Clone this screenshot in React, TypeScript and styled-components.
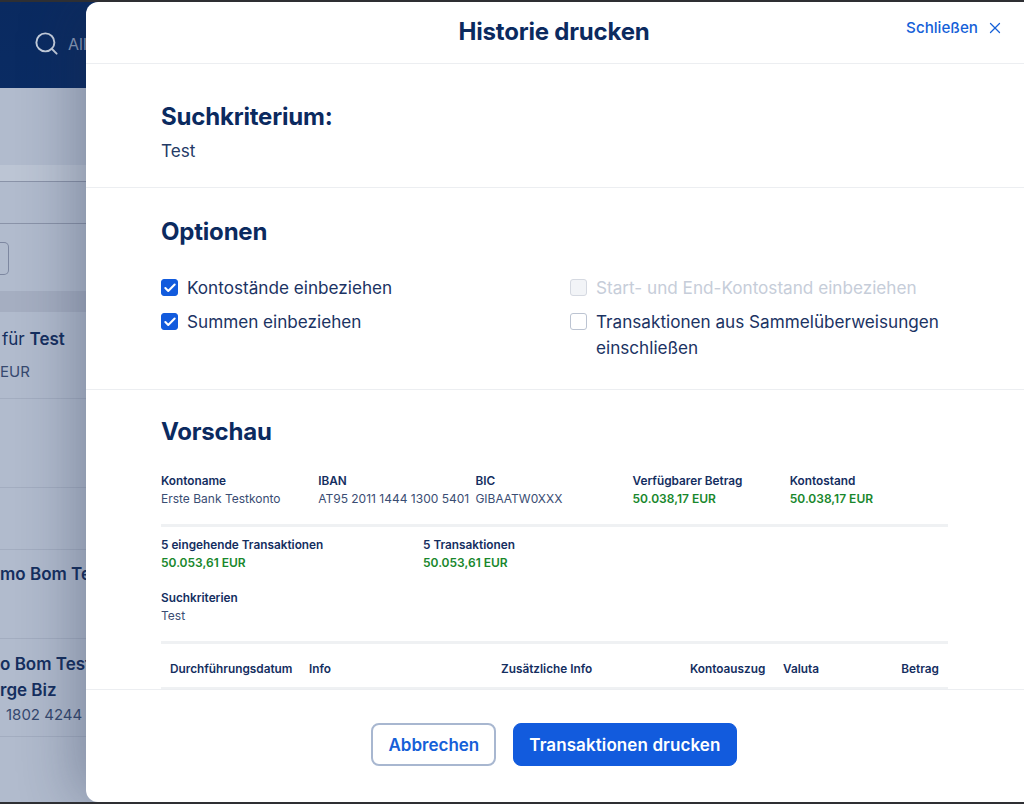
import React from 'react';
import styled, { createGlobalStyle } from 'styled-components';
import { Search, X, Check } from 'lucide-react';

const GlobalStyle = createGlobalStyle`
  html, body {
    margin: 0;
    padding: 0;
    overflow: hidden;
    font-family: Inter, 'Liberation Sans', sans-serif;
  }
  * { box-sizing: border-box; }
`;

const Frame = styled.div`
  width: 1024px;
  height: 804px;
  padding: 2px 0;
  background: #2e2f33;
`;

const Page = styled.div`
  position: relative;
  height: 800px;
  overflow: hidden;
  background: #b1bbcd;
`;

const TopBar = styled.div`
  height: 86px;
  display: flex;
  align-items: flex-start;
  gap: 8px;
  padding: 28px 0 0 33px;
  background: linear-gradient(175deg, #0a2a60 0%, #0a2c64 65%, #0a3578 100%);
  color: #c6cfdd;
`;

const SearchHint = styled.span`
  margin-top: 3px;
  font-size: 16px;
  line-height: 22px;
  color: #8c9cb9;
`;

const Spacer = styled.div<{ $h: number; $bg?: string; $line?: boolean }>`
  height: ${(p) => p.$h}px;
  background: ${(p) => p.$bg ?? 'transparent'};
  border-bottom: ${(p) => (p.$line ? '1px solid #8a93a8' : 'none')};
`;

const FilterRow = styled.div`
  height: 67px;
  padding-top: 18px;
`;

const GhostButton = styled.div`
  width: 9px;
  height: 33px;
  border: 1px solid #7d87a0;
  border-left: none;
  border-radius: 0 5px 5px 0;
`;

const TxRow = styled.div<{ $h: number; $top?: number }>`
  height: ${(p) => p.$h}px;
  padding-top: ${(p) => p.$top ?? 0}px;
  border-bottom: 1px solid #a3adc0;
  color: #152f5f;
  font-size: 16px;
  line-height: 26px;
  white-space: nowrap;
`;

const TxStrong = styled.div<{ $indent?: number }>`
  font-weight: 600;
  font-size: 17px;
  padding-left: ${(p) => p.$indent ?? 0}px;
`;

const TxPlain = styled.span`
  font-weight: 400;
`;

const TxMuted = styled.div<{ $indent?: number; $gap?: number }>`
  margin-top: ${(p) => p.$gap ?? 0}px;
  color: #36496f;
  font-size: 15px;
  padding-left: ${(p) => p.$indent ?? 0}px;
`;

const Modal = styled.div`
  position: absolute;
  top: 0;
  left: 86px;
  right: 0;
  bottom: 0;
  display: flex;
  flex-direction: column;
  background: #fff;
  border-radius: 12px 0 0 12px;
  box-shadow: -12px 0 56px rgba(30, 42, 75, 0.32);
  color: #0b2a5f;
`;

const ModalHead = styled.header`
  position: relative;
  flex: none;
  height: 62px;
  display: flex;
  justify-content: center;
  padding-right: 2px;
  border-bottom: 1px solid #eceef1;
`;

const ModalTitle = styled.h1`
  margin: 0;
  font-size: 24px;
  line-height: 60px;
  font-weight: 700;
  letter-spacing: -0.2px;
`;

const CloseLink = styled.div`
  position: absolute;
  top: 16px;
  right: 20px;
  display: flex;
  align-items: center;
  gap: 8px;
  font-size: 15.2px;
  line-height: 20px;
  font-weight: 500;
  color: #1560d8;
`;

const Body = styled.div`
  flex: 1;
  min-height: 0;
  overflow: hidden;
`;

const Section = styled.section<{ $h?: number; $top: number }>`
  padding: ${(p) => p.$top}px 76px 0 75px;
  height: ${(p) => (p.$h ? `${p.$h}px` : 'auto')};
  border-bottom: ${(p) => (p.$h ? '1px solid #eceef1' : 'none')};
`;

const SectionTitle = styled.h2`
  margin: 0;
  font-size: 24px;
  line-height: 32px;
  font-weight: 700;
  letter-spacing: -0.2px;
`;

const SearchTerm = styled.p`
  margin: 5px 0 0;
  font-size: 17.2px;
  line-height: 26px;
  color: #243a66;
`;

const Options = styled.div`
  display: grid;
  grid-template-columns: 409px 1fr;
  margin-top: 27px;
`;

const OptionColumn = styled.div`
  display: flex;
  flex-direction: column;
  gap: 9px;
`;

const Option = styled.label<{ $disabled?: boolean }>`
  display: flex;
  align-items: flex-start;
  gap: 9px;
  font-size: 17.15px;
  line-height: 26px;
  color: ${(p) => (p.$disabled ? '#c6cdd9' : '#1b3363')};
  margin-bottom: -1px;
`;

const Box = styled.span<{ $checked?: boolean; $disabled?: boolean }>`
  flex: none;
  width: 17px;
  height: 17px;
  margin-top: 4px;
  display: flex;
  align-items: center;
  justify-content: center;
  border-radius: 3px;
  border: 1px solid ${(p) => (p.$checked ? '#125bdd' : p.$disabled ? '#d5d9e1' : '#bcc4d2')};
  background: ${(p) => (p.$checked ? '#125bdd' : p.$disabled ? '#f2f4f7' : '#fff')};
  color: #fff;
`;

const PreviewGrid = styled.div<{ $cols: number }>`
  display: grid;
  grid-template-columns: repeat(${(p) => p.$cols}, ${(p) => 786 / p.$cols}px);
`;

const Divider = styled.div`
  height: 3px;
  background: #eff1f3;
`;

const Cell = styled.div`
  font-size: 12px;
  line-height: 18px;
`;

const CellLabel = styled.div`
  font-size: 11.8px;
  font-weight: 600;
  color: #142e5f;
`;

const CellValue = styled.div<{ $green?: boolean }>`
  font-weight: ${(p) => (p.$green ? 600 : 400)};
  color: ${(p) => (p.$green ? '#18872c' : '#3a4d73')};
  white-space: nowrap;
`;

const TopInfo = styled(PreviewGrid)`
  margin-top: 24px;
  padding-bottom: 16px;
`;

const Totals = styled(PreviewGrid)`
  padding-top: 9px;
`;

const Criteria = styled(Cell)`
  padding: 17px 0 16px;
`;

const TableHead = styled.div`
  display: grid;
  grid-template-columns: 139px 192px 189px 93px 1fr auto;
  height: 46px;
  align-items: center;
  padding: 7px 9px 0;
  border-bottom: 3px solid #eff1f3;
  font-size: 11.8px;
  font-weight: 600;
  color: #142e5f;
`;

const ModalFoot = styled.footer`
  flex: none;
  height: 113px;
  display: flex;
  justify-content: center;
  gap: 17px;
  padding-top: 33px;
  padding-right: 2px;
  border-top: 1px solid #eceef1;
`;

const Button = styled.button<{ $primary?: boolean }>`
  height: 43px;
  padding: 0 15px;
  border-radius: 8px;
  border: ${(p) => (p.$primary ? '1px solid #125bdd' : '2px solid #a8b7d0')};
  background: ${(p) => (p.$primary ? '#125bdd' : '#fff')};
  color: ${(p) => (p.$primary ? '#fff' : '#1560d8')};
  font-family: inherit;
  font-size: 17px;
  font-weight: 600;
  letter-spacing: ${(p) => (p.$primary ? '0.1px' : '0')};
`;

const CheckOption = ({ label, checked, disabled }: { label: string; checked?: boolean; disabled?: boolean }) => (
  <Option $disabled={disabled}>
    <Box $checked={checked} $disabled={disabled}>
      {checked && <Check size={14} strokeWidth={3.5} />}
    </Box>
    <span>{label}</span>
  </Option>
);

const accountInfo = [
  { label: 'Kontoname', value: 'Erste Bank Testkonto' },
  { label: 'IBAN', value: 'AT95 2011 1444 1300 5401' },
  { label: 'BIC', value: 'GIBAATW0XXX' },
  { label: 'Verfügbarer Betrag', value: '50.038,17 EUR', green: true },
  { label: 'Kontostand', value: '50.038,17 EUR', green: true },
];

const App: React.FC = () => {
  return (
    <Frame>
      <GlobalStyle />
      <Page>
        <TopBar>
          <Search size={27} strokeWidth={1.7} />
          <SearchHint>Alle</SearchHint>
        </TopBar>
        <Spacer $h={77} />
        <Spacer $h={17} $bg="#bcc5d4" $line />
        <Spacer $h={42} $line />
        <FilterRow>
          <GhostButton />
        </FilterRow>
        <Spacer $h={21} $bg="#a5aec1" />
        <TxRow $h={87} $top={14}>
          <TxStrong $indent={2}>
            <TxPlain>für </TxPlain>Test
          </TxStrong>
          <TxMuted $gap={7}>EUR</TxMuted>
        </TxRow>
        <TxRow $h={89} />
        <TxRow $h={62} />
        <TxRow $h={89} $top={11}>
          <TxStrong>mo Bom Test</TxStrong>
        </TxRow>
        <TxRow $h={98} $top={12}>
          <TxStrong>o Bom Test</TxStrong>
          <TxStrong>rge Biz</TxStrong>
          <TxMuted $indent={6} $gap={-1}>1802 4244</TxMuted>
        </TxRow>

        <Modal>
          <ModalHead>
            <ModalTitle>Historie drucken</ModalTitle>
            <CloseLink>
              Schließen
              <X size={18} strokeWidth={1.7} />
            </CloseLink>
          </ModalHead>
          <Body>
            <Section $h={124} $top={37}>
              <SectionTitle>Suchkriterium:</SectionTitle>
              <SearchTerm>Test</SearchTerm>
            </Section>
            <Section $h={202} $top={28}>
              <SectionTitle>Optionen</SectionTitle>
              <Options>
                <OptionColumn>
                  <CheckOption label="Kontostände einbeziehen" checked />
                  <CheckOption label="Summen einbeziehen" checked />
                </OptionColumn>
                <OptionColumn>
                  <CheckOption label="Start- und End-Kontostand einbeziehen" disabled />
                  <CheckOption label="Transaktionen aus Sammelüberweisungen einschließen" />
                </OptionColumn>
              </Options>
            </Section>
            <Section $top={26}>
              <SectionTitle>Vorschau</SectionTitle>
              <TopInfo $cols={5}>
                {accountInfo.map((item) => (
                  <Cell key={item.label}>
                    <CellLabel>{item.label}</CellLabel>
                    <CellValue $green={item.green}>{item.value}</CellValue>
                  </Cell>
                ))}
              </TopInfo>
              <Divider />
              <Totals $cols={3}>
                <Cell>
                  <CellLabel>5 eingehende Transaktionen</CellLabel>
                  <CellValue $green>50.053,61 EUR</CellValue>
                </Cell>
                <Cell>
                  <CellLabel>5 Transaktionen</CellLabel>
                  <CellValue $green>50.053,61 EUR</CellValue>
                </Cell>
              </Totals>
              <Criteria>
                <CellLabel>Suchkriterien</CellLabel>
                <CellValue>Test</CellValue>
              </Criteria>
              <Divider />
              <TableHead>
                <span>Durchführungsdatum</span>
                <span>Info</span>
                <span>Zusätzliche Info</span>
                <span>Kontoauszug</span>
                <span>Valuta</span>
                <span>Betrag</span>
              </TableHead>
            </Section>
          </Body>
          <ModalFoot>
            <Button>Abbrechen</Button>
            <Button $primary>Transaktionen drucken</Button>
          </ModalFoot>
        </Modal>
      </Page>
    </Frame>
  );
};

export default App;
